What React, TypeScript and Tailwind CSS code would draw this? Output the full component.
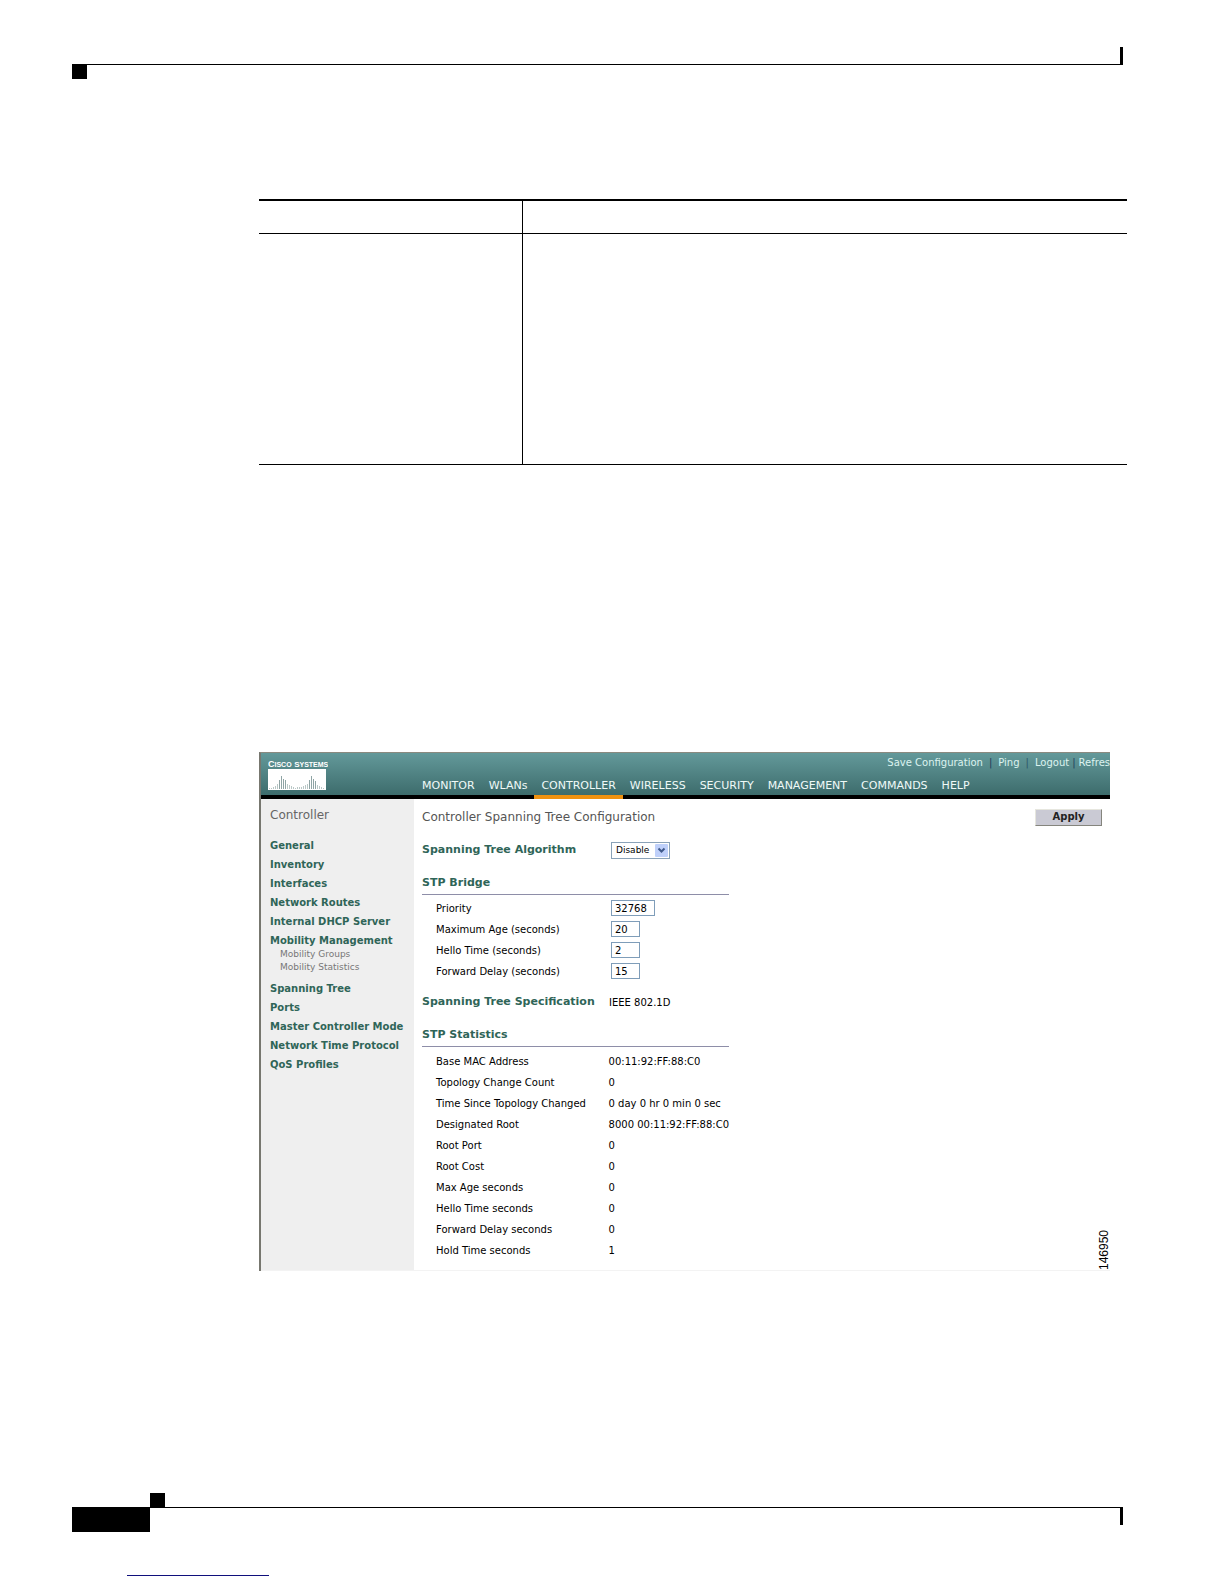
import { useState } from 'react'

const navItems = ['MONITOR', 'WLANs', 'CONTROLLER', 'WIRELESS', 'SECURITY', 'MANAGEMENT', 'COMMANDS', 'HELP']

const sideItems: { label: string; children?: string[] }[] = [
  { label: 'General' },
  { label: 'Inventory' },
  { label: 'Interfaces' },
  { label: 'Network Routes' },
  { label: 'Internal DHCP Server' },
  { label: 'Mobility Management', children: ['Mobility Groups', 'Mobility Statistics'] },
  { label: 'Spanning Tree' },
  { label: 'Ports' },
  { label: 'Master Controller Mode' },
  { label: 'Network Time Protocol' },
  { label: 'QoS Profiles' },
]

const bridgeFields = [
  { id: 'priority', label: 'Priority', value: '32768', width: 'w-11' },
  { id: 'max-age', label: 'Maximum Age (seconds)', value: '20', width: 'w-[29px]' },
  { id: 'hello-time', label: 'Hello Time (seconds)', value: '2', width: 'w-[29px]' },
  { id: 'forward-delay', label: 'Forward Delay (seconds)', value: '15', width: 'w-[29px]' },
]

const stats = [
  ['Base MAC Address', '00:11:92:FF:88:C0'],
  ['Topology Change Count', '0'],
  ['Time Since Topology Changed', '0 day 0 hr 0 min 0 sec'],
  ['Designated Root', '8000 00:11:92:FF:88:C0'],
  ['Root Port', '0'],
  ['Root Cost', '0'],
  ['Max Age seconds', '0'],
  ['Hello Time seconds', '0'],
  ['Forward Delay seconds', '0'],
  ['Hold Time seconds', '1'],
]

// Bar heights of the bridge logo, left to right
const logoBars = [1, 1, 2, 3, 5, 9, 13, 10, 9, 5, 4, 3, 2, 1, 2, 2, 2, 3, 4, 5, 9, 13, 10, 8, 4, 3, 2, 1]

const heading = 'text-[11px] font-bold text-[#2f6558]'

function Logo() {
  return (
    <svg width="60" height="32" viewBox="0 0 60 32" role="img" aria-label="Cisco Systems">
      <text x="0" y="9" fill="#fff" fontSize="9" fontWeight="700" fontFamily="'Liberation Sans Narrow', 'Liberation Sans', sans-serif">
        C<tspan fontSize="7">ISCO</tspan> <tspan fontSize="8">S</tspan><tspan fontSize="7">YSTEMS</tspan>
      </text>
      <rect x="0" y="11" width="58" height="21" fill="#fff" />
      {logoBars.map((h, i) => (
        <rect key={i} x={1 + i * 2} y={31 - h} width="1" height={h} fill={h > 7 ? '#8fa5a5' : '#b9c7c6'} />
      ))}
    </svg>
  )
}

function Banner() {
  return (
    <header className="flex h-[46px] bg-[linear-gradient(to_bottom,#63999a,#3d6c6c_42px,#000_42px)]">
      <div className="w-[153px] shrink-0 pt-[5px] pl-[7px]">
        <Logo />
      </div>
      <div className="flex min-w-0 flex-1 flex-col justify-between">
        <div className="flex h-5 items-center justify-end text-[10px] whitespace-nowrap text-[#dcf3ef]">
          <a href="#save">Save Configuration</a>
          <span className="px-[6px] text-[#1c3c5c]">|</span>
          <a href="#ping">Ping</a>
          <span className="px-[6px] text-[#2c5668]">|</span>
          <a href="#logout">Logout</a>
          <span className="px-[3px] text-[#1c3c5c]">|</span>
          <a href="#refresh">Refres</a>
        </div>
        <nav className="flex h-[22px] pl-px text-[11px] text-[#f0faf8]">
          {navItems.map(item => (
            <a
              key={item}
              href={`#${item.toLowerCase()}`}
              className={`border-b-4 px-[7px] leading-[18px] ${item === 'CONTROLLER' ? 'border-[#ee9211]' : 'border-black'}`}
            >
              {item}
            </a>
          ))}
        </nav>
      </div>
    </header>
  )
}

function Sidebar() {
  return (
    <aside className="w-[153px] shrink-0 bg-[#efefef] pt-[6px] pl-[9px] whitespace-nowrap">
      <h2 className="text-[12px] leading-5 text-[#666]">Controller</h2>
      <ul className="mt-[11px] flex flex-col">
        {sideItems.map(({ label, children }) => (
          <li key={label}>
            <a href="#section" className="block text-[10px] leading-[19px] font-bold text-[#2f6558]">{label}</a>
            {children && (
              <ul className="-mt-0.5 mb-[5px] pl-[10px] text-[9px] leading-[13px] text-[#777]">
                {children.map(child => (
                  <li key={child}><a href="#section">{child}</a></li>
                ))}
              </ul>
            )}
          </li>
        ))}
      </ul>
    </aside>
  )
}

function SpanningTree() {
  const [algorithm, setAlgorithm] = useState('Disable')

  return (
    <main className="min-w-0 flex-1 pr-2 pl-2 text-[10px] text-black">
      <div className="flex h-[37px] items-center justify-between">
        <h1 className="text-[12px] text-[#555]">Controller Spanning Tree Configuration</h1>
        <button className="h-[17px] w-[67px] border border-t-[#e6e6de] border-r-[#85857d] border-b-[#85857d] border-l-[#e6e6de] bg-[#cacad4] text-[10px] leading-none font-bold text-[#222]">
          Apply
        </button>
      </div>

      <div className="flex h-[29px] items-center">
        <label htmlFor="algorithm" className={`w-[189px] ${heading}`}>Spanning Tree Algorithm</label>
        <div className="relative">
          <select
            id="algorithm"
            value={algorithm}
            onChange={e => setAlgorithm(e.target.value)}
            className="block h-[17px] w-[59px] appearance-none border border-[#8aa2b8] bg-white pl-1 text-[9px] leading-none"
          >
            <option>Disable</option>
            <option>Enable</option>
          </select>
          <svg className="pointer-events-none absolute top-[2px] right-[2px]" width="13" height="13" viewBox="0 0 13 13">
            <rect width="13" height="13" rx="1" fill="#bfd0fa" />
            <path d="M3.5 4.5 6.5 7.5 9.5 4.5" fill="none" stroke="#405a8c" strokeWidth="2" />
          </svg>
        </div>
      </div>

      <section className="mt-[7px] w-[307px]">
        <h2 className={`h-[23px] border-b border-[#8e8ea8] leading-[22px] ${heading}`}>STP Bridge</h2>
        <div className="mt-[3px] pl-[14px]">
          {bridgeFields.map(f => (
            <div key={f.id} className="flex h-[21px] items-center">
              <label htmlFor={f.id} className="w-[175px]">{f.label}</label>
              <input
                id={f.id}
                defaultValue={f.value}
                className={`h-4 border border-[#7f9db9] bg-white px-[3px] text-[10px] leading-none ${f.width}`}
              />
            </div>
          ))}
        </div>
      </section>

      <div className="mt-[10px] flex h-[22px] items-center">
        <h2 className={`w-[187px] whitespace-nowrap ${heading}`}>Spanning Tree Specification</h2>
        <span>IEEE 802.1D</span>
      </div>

      <section className="mt-[10px] w-[307px] pb-[9px]">
        <h2 className={`h-[23px] border-b border-[#8e8ea8] leading-[22px] ${heading}`}>STP Statistics</h2>
        <table className="mt-1 w-full whitespace-nowrap">
          <tbody>
            {stats.map(([label, value]) => (
              <tr key={label} className="h-[21px]">
                <th scope="row" className="w-[187px] p-0 pl-[14px] text-left font-normal">{label}</th>
                <td className="p-0">{value}</td>
              </tr>
            ))}
          </tbody>
        </table>
      </section>
    </main>
  )
}

export default function App() {
  return (
    <div className="flex min-h-screen flex-col bg-white pt-[47px] font-['Verdana','DejaVu_Sans',sans-serif]">
      {/* Page head rule */}
      <div className="mr-[101px] ml-[72px]">
        <div className="h-[18px] border-r-3 border-b border-black" />
        <div className="h-[14px] w-[15px] bg-black" />
      </div>

      <div className="mt-[120px] mr-[97px] ml-[259px]">
        <table className="w-full table-fixed border-collapse">
          <tbody>
            <tr className="h-[33px] border-t-2 border-b border-black">
              <td className="w-[263px] border-r border-black" />
              <td />
            </tr>
            <tr className="h-[231px] border-b border-black">
              <td className="border-r border-black" />
              <td />
            </tr>
          </tbody>
        </table>
      </div>

      <div className="relative mt-[287px] mr-[114px] ml-[259px] border-t border-l-2 border-t-[#8a8a80] border-l-[#77776f]">
        <Banner />
        <div className="flex border-b border-[#f3f3f3]">
          <Sidebar />
          <SpanningTree />
        </div>
        <span className="absolute right-0 bottom-0 rotate-180 font-['Liberation_Sans',sans-serif] text-[12px] leading-3 text-black [writing-mode:vertical-rl]">
          146950
        </span>
      </div>

      {/* Page foot rule */}
      <footer className="mt-auto mr-[101px] ml-[72px] pb-2">
        <div className="ml-[78px] h-[14px] w-[15px] bg-black" />
        <div className="flex h-[25px] items-start justify-between border-t border-black">
          <div className="h-6 w-[78px] bg-black" />
          <div className="h-[17px] w-[3px] bg-black" />
        </div>
        <div className="mt-[43px] ml-[55px] h-px w-[142px] bg-[#10107c]" />
      </footer>
    </div>
  )
}
